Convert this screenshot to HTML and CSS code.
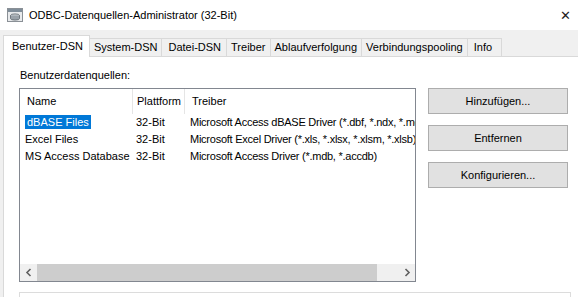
FILE: index.html
```html
<!DOCTYPE html>
<html>
<head>
    <title>ODBC-Datenquellen-Administrator (32-Bit)</title>
    <link rel="stylesheet" href="styles.css">
</head>
<body>
    <div class="window">
        <div class="titlebar">
            <svg class="app-icon" width="16" height="14" viewBox="0 0 16 14">
                <rect x="0.5" y="0.5" width="15" height="13" fill="#e8eaec" stroke="#8a9096"/>
                <rect x="1" y="1" width="14" height="3" fill="#7f8d99"/>
                <ellipse cx="8" cy="7.5" rx="4.5" ry="1.6" fill="#c9ced2" stroke="#5d646b" stroke-width="0.8"/>
                <path d="M3.5 7.5 V10.5 A4.5 1.6 0 0 0 12.5 10.5 V7.5" fill="#9aa2a9" stroke="#5d646b" stroke-width="0.8"/>
            </svg>
            <span class="title">ODBC-Datenquellen-Administrator (32-Bit)</span>
            <span class="close">&#x2715;</span>
        </div>
        <div class="dialog">
            <div class="tabs">
                <div class="tab active">Benutzer-DSN</div>
                <div class="tab">System-DSN</div>
                <div class="tab wide">Datei-DSN</div>
                <div class="tab">Treiber</div>
                <div class="tab">Ablaufverfolgung</div>
                <div class="tab">Verbindungspooling</div>
                <div class="tab info">Info</div>
            </div>
            <div class="panel">
                <div class="caption">Benutzerdatenquellen:</div>
                <div class="content">
                    <div class="listview">
                        <div class="list-head">
                            <div class="col c-name">Name</div>
                            <div class="col c-plat">Plattform</div>
                            <div class="col c-drv">Treiber</div>
                        </div>
                        <div class="list-body">
                            <div class="row">
                                <div class="col c-name"><span class="sel">dBASE Files</span></div>
                                <div class="col c-plat">32-Bit</div>
                                <div class="col c-drv">Microsoft Access dBASE Driver (*.dbf, *.ndx, *.mdx)</div>
                            </div>
                            <div class="row">
                                <div class="col c-name">Excel Files</div>
                                <div class="col c-plat">32-Bit</div>
                                <div class="col c-drv">Microsoft Excel Driver (*.xls, *.xlsx, *.xlsm, *.xlsb)</div>
                            </div>
                            <div class="row">
                                <div class="col c-name">MS Access Database</div>
                                <div class="col c-plat">32-Bit</div>
                                <div class="col c-drv">Microsoft Access Driver (*.mdb, *.accdb)</div>
                            </div>
                        </div>
                        <div class="hscroll">
                            <div class="arrow">
                                <svg width="8" height="9" viewBox="0 0 8 9"><path d="M5.5 1 L2 4.5 L5.5 8" fill="none" stroke="#606060" stroke-width="1.6"/></svg>
                            </div>
                            <div class="thumb"></div>
                            <div class="track"></div>
                            <div class="arrow">
                                <svg width="8" height="9" viewBox="0 0 8 9"><path d="M2.5 1 L6 4.5 L2.5 8" fill="none" stroke="#606060" stroke-width="1.6"/></svg>
                            </div>
                        </div>
                    </div>
                    <div class="buttons">
                        <button>Hinzufügen...</button>
                        <button>Entfernen</button>
                        <button>Konfigurieren...</button>
                    </div>
                </div>
                <div class="groupbox"></div>
            </div>
        </div>
    </div>
</body>
</html>
```

FILE: styles.css
```css
body {
    margin: 0;
    padding: 0;
    font-family: "Liberation Sans", Arial, sans-serif;
    font-size: 11px;
    color: #000;
    background: #fff;
}

.window {
    width: 578px;
    height: 297px;
    overflow: hidden;
    background: #fff;
}

.titlebar {
    height: 30px;
    display: flex;
    align-items: center;
    background: #fff;
}

.app-icon {
    margin-left: 7px;
    margin-right: 6px;
}

.title {
    font-size: 11px;
    flex: 1;
}

.close {
    font-size: 13px;
    margin-right: 7px;
    color: #222;
}

.dialog {
    background: #f0f0f0;
    height: 267px;
    padding-left: 3px;
}

.tabs {
    display: flex;
    align-items: flex-end;
    height: 26px;
}

.tab {
    height: 17px;
    padding: 0 4px;
    line-height: 17px;
    border: 1px solid #d9d9d9;
    border-bottom: none;
    border-left: none;
    background: #f0f0f0;
}

.tab.wide {
    padding: 0 5px 0 6px;
}

.tab.info {
    padding: 0 9px 0 6px;
}

.tab.active {
    height: 21px;
    line-height: 20px;
    padding: 0 6px 0 8px;
    background: #fff;
    border-left: 1px solid #d9d9d9;
    margin-bottom: -1px;
    position: relative;
}

.panel {
    background: #fff;
    border-top: 1px solid #d9d9d9;
    border-left: 1px solid #d9d9d9;
    height: 240px;
    padding-left: 15px;
    padding-top: 12px;
}

.caption {
    margin-left: 1px;
    height: 19px;
}

.content {
    display: flex;
}

.listview {
    width: 395px;
    height: 192px;
    border: 1px solid #828790;
    display: flex;
    flex-direction: column;
}

.list-head {
    display: flex;
    height: 25px;
    align-items: center;
}

.list-head .col {
    border-right: 1px solid #e5e5e5;
    height: 25px;
    line-height: 25px;
}

.list-head .c-drv {
    border-right: none;
}

.col {
    white-space: nowrap;
    overflow: hidden;
    flex: none;
}

.c-name {
    width: 105px;
    padding-left: 7px;
}

.c-plat {
    width: 47px;
    padding-left: 4px;
}

.c-drv {
    flex: 1;
    padding-left: 7px;
}

.row .c-drv {
    letter-spacing: -0.25px;
}

.list-body {
    flex: 1;
}

.row {
    display: flex;
    height: 17px;
    line-height: 17px;
}

.row .c-name {
    padding-left: 5px;
    width: 107px;
}

.sel {
    background: #0078d7;
    color: #fff;
    padding: 1px 2px;
}

.hscroll {
    display: flex;
    height: 17px;
    background: #f0f0f0;
}

.arrow {
    width: 17px;
    display: flex;
    align-items: center;
    justify-content: center;
}

.thumb {
    width: 340px;
    background: #cdcdcd;
}

.track {
    flex: 1;
}

.buttons {
    margin-left: 12px;
    display: flex;
    flex-direction: column;
    gap: 11px;
}

button {
    width: 140px;
    height: 26px;
    background: #e1e1e1;
    border: 1px solid #adadad;
    font-family: "Liberation Sans", Arial, sans-serif;
    font-size: 11px;
    color: #000;
    padding: 0;
}

.groupbox {
    margin-top: 10px;
    width: 550px;
    height: 30px;
    border: 1px solid #dcdcdc;
}
```
